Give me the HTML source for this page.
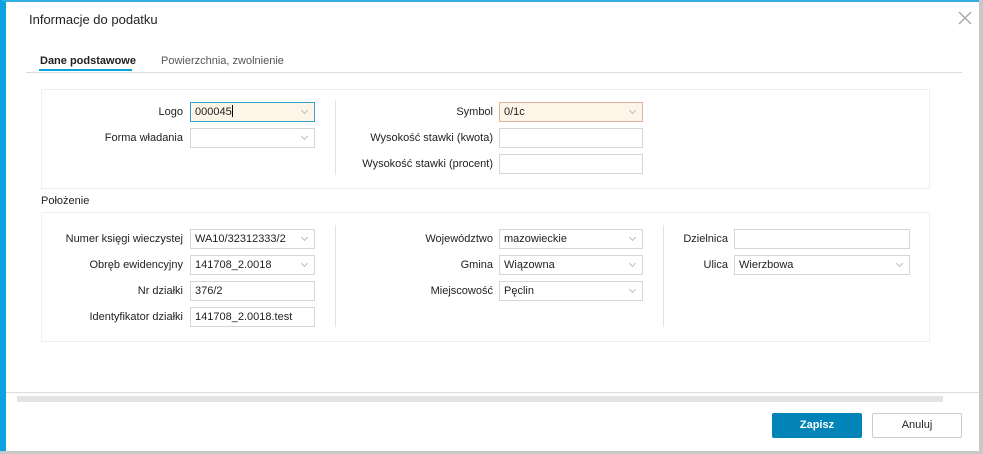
<!DOCTYPE html><html><head><style>
*{box-sizing:border-box;margin:0;padding:0}
body{width:983px;height:454px;background:#c8c8c8;font-family:"Liberation Sans",Arial,sans-serif;font-size:11px;color:#222;position:relative;overflow:hidden}
.a{position:absolute}
.dlg{left:0;top:0;width:979px;height:451px;background:#fff;border-left:6px solid #0aa3e0;border-top:2px solid #33aee0}
.lbl{position:absolute;text-align:right;white-space:nowrap;line-height:20px}
.f{position:absolute;height:20px;border:1px solid #d6d6d6;background:#fff;line-height:19px;padding-left:4px;font-size:11px}
.dd::after{content:"";position:absolute;right:7px;top:5px;width:4px;height:4px;border-right:1px solid #bbb;border-bottom:1px solid #bbb;transform:rotate(45deg)}
.box{position:absolute;border:1px solid #efefef;background:#fff}
.vs{position:absolute;width:1px;background:#e2e2e2}
</style></head><body>
<div class="a dlg"></div>
<div class="a" style="left:29px;top:12px;font-size:13px;color:#222">Informacje do podatku</div>
<svg class="a" style="left:958px;top:11px" width="14" height="14"><path d="M1 1L13 13M13 1L1 13" stroke="#aaa" stroke-width="1.5"/></svg>
<div class="a" style="left:40px;top:55px;font-weight:bold;font-size:11px">Dane podstawowe</div>
<div class="a" style="left:161px;top:55px;color:#555">Powierzchnia, zwolnienie</div>
<div class="a" style="left:26px;top:72px;width:936px;height:1px;background:#ddd"></div>
<div class="a" style="left:39px;top:69px;width:93px;height:2px;background:#0aa3e0"></div>

<div class="box" style="left:41px;top:89px;width:889px;height:100px"></div>
<div class="vs" style="left:335px;top:100px;height:75px"></div>
<div class="lbl" style="right:800px;top:102px">Logo</div>
<div class="f dd" style="left:190px;top:102px;width:125px;background:#fdf6e8;border-color:#3aa0d0">000045<span style="display:inline-block;width:1px;height:12px;background:#000;vertical-align:-2px"></span></div>
<div class="lbl" style="right:800px;top:128px">Forma władania</div>
<div class="f dd" style="left:190px;top:128px;width:125px"></div>
<div class="lbl" style="right:490px;top:102px">Symbol</div>
<div class="f dd" style="left:499px;top:102px;width:144px;background:#fdf6e8;border-color:#e0b09a">0/1c</div>
<div class="lbl" style="right:490px;top:128px">Wysokość stawki (kwota)</div>
<div class="f" style="left:499px;top:128px;width:144px"></div>
<div class="lbl" style="right:490px;top:154px">Wysokość stawki (procent)</div>
<div class="f" style="left:499px;top:154px;width:144px"></div>

<div class="a" style="left:41px;top:195px">Położenie</div>
<div class="box" style="left:41px;top:212px;width:889px;height:130px"></div>
<div class="vs" style="left:335px;top:225px;height:102px"></div>
<div class="vs" style="left:663px;top:225px;height:102px"></div>
<div class="lbl" style="right:800px;top:229px">Numer księgi wieczystej</div>
<div class="f dd" style="left:190px;top:229px;width:125px">WA10/32312333/2</div>
<div class="lbl" style="right:800px;top:255px">Obręb ewidencyjny</div>
<div class="f dd" style="left:190px;top:255px;width:125px">141708_2.0018</div>
<div class="lbl" style="right:800px;top:281px">Nr działki</div>
<div class="f" style="left:190px;top:281px;width:125px">376/2</div>
<div class="lbl" style="right:800px;top:307px">Identyfikator działki</div>
<div class="f" style="left:190px;top:307px;width:125px">141708_2.0018.test</div>
<div class="lbl" style="right:490px;top:229px">Województwo</div>
<div class="f dd" style="left:499px;top:229px;width:144px">mazowieckie</div>
<div class="lbl" style="right:490px;top:255px">Gmina</div>
<div class="f dd" style="left:499px;top:255px;width:144px">Wiązowna</div>
<div class="lbl" style="right:490px;top:281px">Miejscowość</div>
<div class="f dd" style="left:499px;top:281px;width:144px">Pęclin</div>
<div class="lbl" style="right:255px;top:229px">Dzielnica</div>
<div class="f" style="left:734px;top:229px;width:176px"></div>
<div class="lbl" style="right:255px;top:255px">Ulica</div>
<div class="f dd" style="left:734px;top:255px;width:176px">Wierzbowa</div>

<div class="a" style="left:6px;top:392px;width:973px;height:1px;background:#ddd"></div>
<div class="a" style="left:17px;top:396px;width:926px;height:6px;background:#e4e4e4"></div>
<div class="a" style="left:772px;top:413px;width:90px;height:25px;background:#0284b8;border-radius:2px;color:#fff;text-align:center;line-height:25px;font-weight:bold">Zapisz</div>
<div class="a" style="left:872px;top:413px;width:90px;height:25px;border:1px solid #ccc;border-radius:2px;text-align:center;line-height:23px">Anuluj</div>
</body></html>
